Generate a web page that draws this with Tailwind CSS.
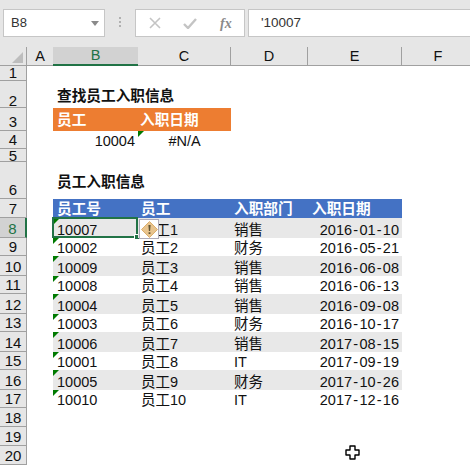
<!DOCTYPE html>
<html><head><meta charset="utf-8"><script src="https://cdn.jsdelivr.net/npm/@tailwindcss/browser@4"></script></head>
<body class="m-0 w-[470px] h-[465px] overflow-hidden bg-white text-[#111] text-[14.5px] font-['Liberation_Sans','Noto_Sans_CJK_SC',sans-serif]">
<div class="h-[47px] bg-[#e6e6e6] flex items-start pt-[9px] pl-[3px]">
  <div class="w-[102px] h-[28px] bg-white border border-[#c6c6c6] flex items-center justify-between pl-[7px] pr-[5px] text-[13px] text-[#333]">B8<svg width="8" height="5"><path d="M0 0H8L4 5Z" fill="#8a8a8a"/></svg></div>
  <div class="ml-[14px] mt-[8px] flex flex-col gap-[2px]"><i class="block w-[2px] h-[2px] bg-[#b0b0b0]"></i><i class="block w-[2px] h-[2px] bg-[#b0b0b0]"></i><i class="block w-[2px] h-[2px] bg-[#b0b0b0]"></i></div>
  <div class="ml-[14px] w-[110px] h-[28px] bg-white border border-[#c6c6c6] flex items-center gap-[22px] pl-[13px]">
    <svg width="12" height="12"><path d="M1 1L11 11M11 1L1 11" stroke="#c4c4c4" stroke-width="1.6"/></svg>
    <svg width="14" height="11"><path d="M1 6L5 10L13 1" stroke="#c4c4c4" stroke-width="2.4" fill="none"/></svg>
    <span class="font-['Liberation_Serif',serif] italic font-bold text-[14px] text-[#8a8a8a] ml-[1px]">fx</span>
  </div>
  <div class="ml-[3px] flex-1 h-[28px] bg-white border border-[#c6c6c6] border-r-0 flex items-center pl-[12px] text-[13.5px] text-[#333]">'10007</div>
</div>
<div class="relative grid grid-cols-[27px_26px_85px_93px_77px_94px_1fr] grid-rows-[19px_15px_27px_23px_18px_13px_37px_19px_20px_18px_20px_18px_20px_18px_20px_18px_20px_18px_19px_19px_19px]">
  <div class="bg-[#e6e6e6] border-r border-b border-[#a0a0a0] relative"><svg class="absolute right-[3px] bottom-[2px]" width="11" height="11"><path d="M11 0V11H0Z" fill="#bdbdbd"/></svg></div>
  <div class="bg-[#e6e6e6] border-b border-[#a0a0a0] flex justify-center items-end leading-[18px]">A</div>
  <div class="bg-[#d2d2d2] border-b-2 border-[#217346] text-[#217346] flex justify-center items-end leading-[17px]">B</div>
  <div class="bg-[#e6e6e6] border-b border-r border-[#a0a0a0] flex justify-center items-end leading-[18px]">C</div>
  <div class="bg-[#e6e6e6] border-b border-r border-[#a0a0a0] flex justify-center items-end leading-[18px]">D</div>
  <div class="bg-[#e6e6e6] border-b border-r border-[#a0a0a0] flex justify-center items-end leading-[18px]">E</div>
  <div class="bg-[#e6e6e6] border-b border-[#a0a0a0] flex justify-center items-end leading-[18px] pl-[4px]">F</div>

  <div class="bg-[#e6e6e6] border-r border-b border-[#a0a0a0] flex justify-center items-end text-[15px] leading-[14px]">1</div><div class="col-span-6"></div>

  <div class="bg-[#e6e6e6] border-r border-b border-[#a0a0a0] flex justify-center items-end text-[15px] leading-[13px]">2</div><div></div>
  <div class="col-span-3 flex items-end pl-[4px] pb-[1px] font-bold text-[14.67px] whitespace-nowrap">查找员工入职信息</div><div class="col-span-2"></div>

  <div class="bg-[#e6e6e6] border-r border-b border-[#a0a0a0] flex justify-center items-end text-[15px] leading-[16px]">3</div><div></div>
  <div class="bg-[#ed7d31] text-white font-bold text-[14.67px] pl-[4px] flex items-center">员工</div>
  <div class="bg-[#ed7d31] text-white font-bold text-[14.67px] pl-[2px] flex items-center">入职日期</div><div class="col-span-3"></div>

  <div class="bg-[#e6e6e6] border-r border-b border-[#a0a0a0] flex justify-center items-end text-[15px] leading-[16px]">4</div><div></div>
  <div class="flex justify-end items-end leading-[16px] pr-[3px] relative"><svg class="absolute -right-[6px] top-0" width="6" height="6"><path d="M0 0H6L0 6Z" fill="#007a00"/></svg>10004</div>
  <div class="flex justify-center items-end leading-[16px]">#N/A</div><div class="col-span-3"></div>

  <div class="bg-[#e6e6e6] border-r border-b border-[#a0a0a0] flex justify-center items-center text-[15px] leading-[13px]">5</div><div class="col-span-6"></div>

  <div class="bg-[#e6e6e6] border-r border-b border-[#a0a0a0] flex justify-center items-end text-[15px] leading-[16px]">6</div><div></div>
  <div class="col-span-3 flex items-end pl-[4px] pb-[6px] font-bold text-[14.67px]">员工入职信息</div><div class="col-span-2"></div>

  <div class="bg-[#e6e6e6] border-r border-b border-[#a0a0a0] flex justify-center items-end text-[15px] leading-[16px]">7</div><div></div>
  <div class="bg-[#4472c4] text-white font-bold text-[14.67px] pl-[4px] flex items-end leading-[17px]">员工号</div>
  <div class="bg-[#4472c4] text-white font-bold text-[14.67px] pl-[3px] flex items-end leading-[17px]">员工</div>
  <div class="bg-[#4472c4] text-white font-bold text-[14.67px] pl-[3px] flex items-end leading-[17px]">入职部门</div>
  <div class="bg-[#4472c4] text-white font-bold text-[14.67px] pl-[4px] flex items-end leading-[17px]">入职日期</div><div></div>

  <div class="bg-[#d2d2d2] border-r-2 border-r-[#217346] border-b border-b-[#a0a0a0] text-[#217346] flex justify-center items-end text-[15px] leading-[16px]">8</div><div></div>
  <div class="relative bg-[#e8e8e8] pl-[4px] flex items-end leading-[16px]">10007
    <div class="absolute -left-[1px] -top-[1px] right-0 bottom-0 border-2 border-[#217346]"></div>
    <svg class="absolute left-[1px] top-[1px]" width="5" height="5"><path d="M0 0H5L0 5Z" fill="#007a00"/></svg>
    <div class="absolute -right-[2px] -bottom-[2px] w-[6px] h-[6px] bg-[#217346] border border-white"></div>
  </div>
  <div class="relative bg-[#e8e8e8] pl-[3px] flex items-end leading-[16px]">员工1
    <div class="absolute left-[1px] top-[1px] w-[20px] h-[20px] bg-white border border-[#aeaab8] flex items-center justify-center"><svg width="17" height="17" viewBox="0 0 17 17"><path d="M8.5 0.5L16.5 8.5L8.5 16.5L0.5 8.5Z" fill="#e8c48e" stroke="#dcae6c"/><path d="M7.4 4H9.6L9.1 10H7.9Z M7.6 11.2H9.4V13H7.6Z" fill="#5f5333"/></svg></div>
  </div>
  <div class="bg-[#e8e8e8] pl-[3px] flex items-end leading-[16px]">销售</div>
  <div class="bg-[#e8e8e8] flex justify-end items-end leading-[16px] pr-[3px]">2016<span class="mx-[1.25px]">-</span>01<span class="mx-[1.25px]">-</span>10</div><div></div>

  <div class="bg-[#e6e6e6] border-r border-b border-[#a0a0a0] flex justify-center items-end text-[15px] leading-[16px]">9</div><div></div>
  <div class="relative pl-[4px] flex items-end leading-[16px]"><svg class="absolute left-0 top-0" width="6" height="6"><path d="M0 0H6L0 6Z" fill="#007a00"/></svg>10002</div>
  <div class="pl-[3px] flex items-end leading-[16px]">员工2</div>
  <div class="pl-[3px] flex items-end leading-[16px]">财务</div>
  <div class="flex justify-end items-end leading-[16px] pr-[3px]">2016<span class="mx-[1.25px]">-</span>05<span class="mx-[1.25px]">-</span>21</div><div></div>

  <div class="bg-[#e6e6e6] border-r border-b border-[#a0a0a0] flex justify-center items-end text-[15px] leading-[16px]">10</div><div></div>
  <div class="relative bg-[#e8e8e8] pl-[4px] flex items-end leading-[16px]"><svg class="absolute left-0 top-0" width="6" height="6"><path d="M0 0H6L0 6Z" fill="#007a00"/></svg>10009</div>
  <div class="bg-[#e8e8e8] pl-[3px] flex items-end leading-[16px]">员工3</div>
  <div class="bg-[#e8e8e8] pl-[3px] flex items-end leading-[16px]">销售</div>
  <div class="bg-[#e8e8e8] flex justify-end items-end leading-[16px] pr-[3px]">2016<span class="mx-[1.25px]">-</span>06<span class="mx-[1.25px]">-</span>08</div><div></div>

  <div class="bg-[#e6e6e6] border-r border-b border-[#a0a0a0] flex justify-center items-end text-[15px] leading-[16px]">11</div><div></div>
  <div class="relative pl-[4px] flex items-end leading-[16px]"><svg class="absolute left-0 top-0" width="6" height="6"><path d="M0 0H6L0 6Z" fill="#007a00"/></svg>10008</div>
  <div class="pl-[3px] flex items-end leading-[16px]">员工4</div>
  <div class="pl-[3px] flex items-end leading-[16px]">销售</div>
  <div class="flex justify-end items-end leading-[16px] pr-[3px]">2016<span class="mx-[1.25px]">-</span>06<span class="mx-[1.25px]">-</span>13</div><div></div>

  <div class="bg-[#e6e6e6] border-r border-b border-[#a0a0a0] flex justify-center items-end text-[15px] leading-[16px]">12</div><div></div>
  <div class="relative bg-[#e8e8e8] pl-[4px] flex items-end leading-[16px]"><svg class="absolute left-0 top-0" width="6" height="6"><path d="M0 0H6L0 6Z" fill="#007a00"/></svg>10004</div>
  <div class="bg-[#e8e8e8] pl-[3px] flex items-end leading-[16px]">员工5</div>
  <div class="bg-[#e8e8e8] pl-[3px] flex items-end leading-[16px]">销售</div>
  <div class="bg-[#e8e8e8] flex justify-end items-end leading-[16px] pr-[3px]">2016<span class="mx-[1.25px]">-</span>09<span class="mx-[1.25px]">-</span>08</div><div></div>

  <div class="bg-[#e6e6e6] border-r border-b border-[#a0a0a0] flex justify-center items-end text-[15px] leading-[16px]">13</div><div></div>
  <div class="relative pl-[4px] flex items-end leading-[16px]"><svg class="absolute left-0 top-0" width="6" height="6"><path d="M0 0H6L0 6Z" fill="#007a00"/></svg>10003</div>
  <div class="pl-[3px] flex items-end leading-[16px]">员工6</div>
  <div class="pl-[3px] flex items-end leading-[16px]">财务</div>
  <div class="flex justify-end items-end leading-[16px] pr-[3px]">2016<span class="mx-[1.25px]">-</span>10<span class="mx-[1.25px]">-</span>17</div><div></div>

  <div class="bg-[#e6e6e6] border-r border-b border-[#a0a0a0] flex justify-center items-end text-[15px] leading-[16px]">14</div><div></div>
  <div class="relative bg-[#e8e8e8] pl-[4px] flex items-end leading-[16px]"><svg class="absolute left-0 top-0" width="6" height="6"><path d="M0 0H6L0 6Z" fill="#007a00"/></svg>10006</div>
  <div class="bg-[#e8e8e8] pl-[3px] flex items-end leading-[16px]">员工7</div>
  <div class="bg-[#e8e8e8] pl-[3px] flex items-end leading-[16px]">销售</div>
  <div class="bg-[#e8e8e8] flex justify-end items-end leading-[16px] pr-[3px]">2017<span class="mx-[1.25px]">-</span>08<span class="mx-[1.25px]">-</span>15</div><div></div>

  <div class="bg-[#e6e6e6] border-r border-b border-[#a0a0a0] flex justify-center items-end text-[15px] leading-[16px]">15</div><div></div>
  <div class="relative pl-[4px] flex items-end leading-[16px]"><svg class="absolute left-0 top-0" width="6" height="6"><path d="M0 0H6L0 6Z" fill="#007a00"/></svg>10001</div>
  <div class="pl-[3px] flex items-end leading-[16px]">员工8</div>
  <div class="pl-[3px] flex items-end leading-[16px]">IT</div>
  <div class="flex justify-end items-end leading-[16px] pr-[3px]">2017<span class="mx-[1.25px]">-</span>09<span class="mx-[1.25px]">-</span>19</div><div></div>

  <div class="bg-[#e6e6e6] border-r border-b border-[#a0a0a0] flex justify-center items-end text-[15px] leading-[16px]">16</div><div></div>
  <div class="relative bg-[#e8e8e8] pl-[4px] flex items-end leading-[16px]"><svg class="absolute left-0 top-0" width="6" height="6"><path d="M0 0H6L0 6Z" fill="#007a00"/></svg>10005</div>
  <div class="bg-[#e8e8e8] pl-[3px] flex items-end leading-[16px]">员工9</div>
  <div class="bg-[#e8e8e8] pl-[3px] flex items-end leading-[16px]">财务</div>
  <div class="bg-[#e8e8e8] flex justify-end items-end leading-[16px] pr-[3px]">2017<span class="mx-[1.25px]">-</span>10<span class="mx-[1.25px]">-</span>26</div><div></div>

  <div class="bg-[#e6e6e6] border-r border-b border-[#a0a0a0] flex justify-center items-end text-[15px] leading-[16px]">17</div><div></div>
  <div class="relative pl-[4px] flex items-end leading-[16px]"><svg class="absolute left-0 top-0" width="6" height="6"><path d="M0 0H6L0 6Z" fill="#007a00"/></svg>10010</div>
  <div class="pl-[3px] flex items-end leading-[16px]">员工10</div>
  <div class="pl-[3px] flex items-end leading-[16px]">IT</div>
  <div class="flex justify-end items-end leading-[16px] pr-[3px]">2017<span class="mx-[1.25px]">-</span>12<span class="mx-[1.25px]">-</span>16</div><div></div>

  <div class="bg-[#e6e6e6] border-r border-b border-[#a0a0a0] flex justify-center items-end text-[15px] leading-[16px]">18</div><div class="col-span-6"></div>
  <div class="bg-[#e6e6e6] border-r border-b border-[#a0a0a0] flex justify-center items-end text-[15px] leading-[16px]">19</div><div class="col-span-6"></div>
  <div class="bg-[#e6e6e6] border-r border-b border-[#a0a0a0] flex justify-center items-end text-[15px] leading-[16px]">20</div><div class="col-span-6"></div>
  <svg class="absolute left-[345px] top-[398px]" width="15" height="15" viewBox="0 0 15 15"><path d="M5 1H10V5H14V10H10V14H5V10H1V5H5Z" fill="white" stroke="black" stroke-width="1.4" stroke-linejoin="round"/></svg>
</div>
</body></html>
